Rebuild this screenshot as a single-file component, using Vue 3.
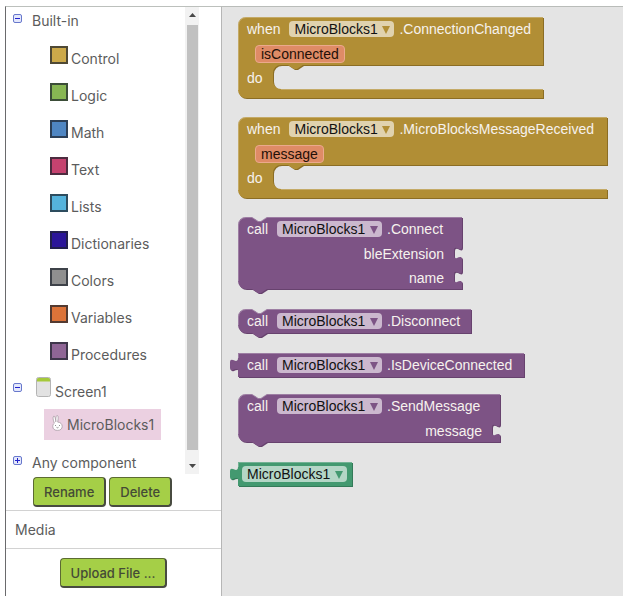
<script setup>
import { ref } from 'vue'

const drawers = [
  { name: 'Control', color: '#cca94a' },
  { name: 'Logic', color: '#87b653' },
  { name: 'Math', color: '#4f86c3' },
  { name: 'Text', color: '#c5426f' },
  { name: 'Lists', color: '#55b3dc' },
  { name: 'Dictionaries', color: '#2b1599' },
  { name: 'Colors', color: '#8f8f8f' },
  { name: 'Variables', color: '#dc7339' },
  { name: 'Procedures', color: '#8f6596' }
]

const instance = ref('MicroBlocks1')

const blocks = [
  { kind: 'event', lead: 'when', member: '.ConnectionChanged', args: ['isConnected'], width: 306 },
  { kind: 'event', lead: 'when', member: '.MicroBlocksMessageReceived', args: ['message'], width: 370 },
  { kind: 'call', lead: 'call', member: '.Connect', args: ['bleExtension', 'name'], width: 225 },
  { kind: 'call', lead: 'call', member: '.Disconnect', args: [], width: 234 },
  { kind: 'value', lead: 'call', member: '.IsDeviceConnected', args: [], width: 287 },
  { kind: 'call', lead: 'call', member: '.SendMessage', args: ['message'], width: 263 },
  { kind: 'getter', lead: '', member: '', args: [], width: 115 }
]

const HEAD = 25
const ROW = 24

// Outline of a block, with its notches, sockets and plugs.
function outline(b) {
  const w = b.width - 1
  if (b.kind === 'event') {
    return `M8,0 H${w} V48 H65 l-6,4 h-3 l-6,-4 H43 a8,8 0 0 0 -8,8 V64 a8,8 0 0 0 8,8 H${w} V81 H8 a8,8 0 0 1 -8,-8 V8 a8,8 0 0 1 8,-8 z`
  }
  if (b.kind === 'call') {
    const h = HEAD + ROW * b.args.length - 1
    const sockets = b.args
      .map((_, i) => `V${HEAD + ROW * i + 5} c0,4 -3,2 -5,1 q-3,-1 -3,2 v6 q0,3 3,2 c2,-1 5,-2 5,1`)
      .join(' ')
    return `M8,0 H14 l6,4 h3 l6,-4 H${w} ${sockets} V${h} H29 l-6,4 h-3 l-6,-4 H8 a8,8 0 0 1 -8,-8 V8 a8,8 0 0 1 8,-8 z`
  }
  return `M0,0 H${w} V24 H0 V18 c0,-3 -3,-2 -5,-1 q-3,1 -3,-2 v-6 q0,-3 3,-2 c2,1 5,2 5,-2 z`
}

function shine(b) {
  const w = b.width - 1
  if (b.kind === 'event') return `M0.5,73 V8 a7.5,7.5 0 0 1 7.5,-7.5 H${w} M43,72.5 H${w}`
  if (b.kind === 'call') {
    const h = HEAD + ROW * b.args.length - 9
    return `M0.5,${h} V8 a7.5,7.5 0 0 1 7.5,-7.5 H14 l6,4 h3 l6,-4 H${w}`
  }
  return `M0.5,5 V0.5 H${w}`
}
</script>

<template>
  <div class="app">
    <aside class="side">
      <div class="tree-wrap">
        <nav class="tree" aria-label="Blocks">
          <div class="branch first">
            <button class="toggle" type="button" aria-label="Collapse Built-in">
              <svg viewBox="0 0 9 9"><rect x=".5" y=".5" width="8" height="8" rx="1.5" /><path d="M2,4.5 h5" /></svg>
            </button>
            <span>Built-in</span>
          </div>
          <a v-for="d in drawers" :key="d.name" class="drawer" href="#">
            <i class="swatch" :style="{ backgroundColor: d.color }"></i>
            <span>{{ d.name }}</span>
          </a>
          <div class="branch screen">
            <button class="toggle" type="button" aria-label="Collapse Screen1">
              <svg viewBox="0 0 9 9"><rect x=".5" y=".5" width="8" height="8" rx="1.5" /><path d="M2,4.5 h5" /></svg>
            </button>
            <svg class="phone" viewBox="0 0 15 20">
              <rect x=".5" y=".5" width="14" height="19" rx="2" fill="#e2e2e2" stroke="#b4b4b4" />
              <path d="M1,4.5 V2.5 a1.5,1.5 0 0 1 1.5,-1.5 h10 a1.5,1.5 0 0 1 1.5,1.5 v2 z" fill="#a5c93a" />
            </svg>
            <span>Screen1</span>
          </div>
          <a class="selected" href="#">
            <svg class="rabbit" viewBox="0 0 11 16" fill="#fff" stroke="#a89ca4" stroke-width=".8">
              <path d="M2.3,8.2 C1,5 .6,1.8 1.7,1.2 C3,.6 3.6,4 3.8,6.8 C3.7,3.4 4,.4 5.2,.5 C6.6,.7 6.2,4.2 5.7,7.1 C8.5,7.2 10.2,9 10.2,11.4 C10.2,13.8 8.4,15.4 5.5,15.4 C2.6,15.4 .8,14 .8,11.6 C.8,10 1.4,8.9 2.3,8.2 z" />
              <path d="M3.5,10 v1 M7.5,10 v1 M4.5,12.3 q1,1 2,0" fill="none" stroke="#777" />
            </svg>
            <span>MicroBlocks1</span>
          </a>
          <div class="branch last">
            <button class="toggle" type="button" aria-label="Expand Any component">
              <svg viewBox="0 0 9 9"><rect x=".5" y=".5" width="8" height="8" rx="1.5" /><path d="M2,4.5 h5 M4.5,2 v5" /></svg>
            </button>
            <span>Any component</span>
          </div>
        </nav>
        <div class="bar" aria-hidden="true">
          <svg viewBox="0 0 7 4"><path d="M0,4 L3.5,0 L7,4 z" /></svg>
          <div class="thumb"></div>
          <svg viewBox="0 0 7 4"><path d="M0,0 L3.5,4 L7,0 z" /></svg>
        </div>
      </div>
      <div class="actions">
        <button class="btn" type="button">Rename</button>
        <button class="btn" type="button">Delete</button>
      </div>
      <h2 class="media">Media</h2>
      <div class="upload">
        <button class="btn" type="button">Upload File ...</button>
      </div>
    </aside>

    <main class="canvas">
      <div v-for="(b, i) in blocks" :key="i" class="block" :class="b.kind" :style="{ width: b.width + 'px' }">
        <svg class="shape" aria-hidden="true">
          <path class="edge" :d="outline(b)" transform="translate(1 1)" />
          <path class="body" :d="outline(b)" />
          <path class="shine" :d="shine(b)" />
        </svg>
        <div class="head">
          <span v-if="b.lead" class="lead">{{ b.lead }}</span>
          <span class="pick">
            <select v-model="instance" aria-label="Component">
              <option>MicroBlocks1</option>
            </select>
            <svg viewBox="0 0 8 8" aria-hidden="true"><path d="M0,0 H8 L4,8 z" /></svg>
          </span>
          <span v-if="b.member">{{ b.member }}</span>
        </div>
        <template v-if="b.kind === 'event'">
          <div class="params">
            <span v-for="a in b.args" :key="a" class="param">{{ a }}</span>
          </div>
          <div class="do">do</div>
        </template>
        <template v-else>
          <div v-for="a in b.args" :key="a" class="arg">{{ a }}</div>
        </template>
      </div>
    </main>
  </div>
</template>

<style>
body {
  background: #fff;
}
</style>

<style scoped>
.app {
  box-sizing: border-box;
  min-height: 100vh;
  padding: 6px 5px 4px;
  display: grid;
  grid-template-columns: 217px 1fr;
  font-family: Inter, "Open Sans", sans-serif;
  font-size: 14px;
  color: #5c5c5c;
}
.side {
  display: flex;
  flex-direction: column;
  border-left: 1px solid #6a6a6c;
  border-right: 1px solid #b6b6b6;
  border-top: 1px solid #bcc0bc;
}
.tree-wrap {
  display: flex;
  justify-content: space-between;
  padding-right: 22px;
}
.tree {
  display: flex;
  flex-direction: column;
  align-items: flex-start;
}
.tree a {
  color: inherit;
  text-decoration: none;
}
.branch {
  display: flex;
  align-items: center;
  padding-left: 7px;
}
.first {
  height: 27px;
  margin-bottom: 6px;
}
.screen {
  height: 36px;
}
.last {
  height: 23px;
  margin-top: 11px;
}
.toggle {
  flex: none;
  width: 9px;
  height: 9px;
  margin: 0 10px 4px 0;
  padding: 0;
  border: 0;
  background: none;
}
.toggle svg {
  display: block;
  width: 9px;
  height: 9px;
  fill: #e4e8fc;
  stroke: #6878cc;
}
.toggle path {
  stroke: #2222cc;
}
.screen .toggle {
  margin-bottom: 8px;
  margin-right: 14px;
}
.phone {
  width: 15px;
  height: 20px;
  margin: 0 4px 8px 0;
}
.drawer {
  display: flex;
  align-items: baseline;
  gap: 3px;
  height: 37px;
  line-height: 37px;
  padding-left: 44px;
}
.swatch {
  box-sizing: border-box;
  width: 18px;
  height: 18px;
  border: 2px solid rgba(30, 36, 46, 0.72);
}
.selected {
  display: flex;
  align-items: center;
  gap: 4px;
  height: 31px;
  margin-left: 38px;
  padding: 0 7px 0 8px;
  background: #ebd0e1;
}
.rabbit {
  width: 11px;
  height: 16px;
  margin-bottom: 4px;
}
.bar {
  display: flex;
  flex-direction: column;
  align-items: center;
  gap: 8px;
  width: 14px;
  padding: 6px 0;
  box-sizing: border-box;
  background: #f2f2f2;
}
.bar svg {
  flex: none;
  width: 7px;
  height: 4px;
  fill: #484848;
}
.thumb {
  flex: 1;
  width: 11px;
  margin-bottom: 6px;
  background: #c1c1c1;
}
.actions {
  display: flex;
  gap: 3px;
  padding: 3px 0 3px 27px;
}
.btn {
  height: 30px;
  padding: 0 10px;
  border: 1px solid #5c6b32;
  border-right: 2px solid #484b40;
  border-bottom: 2px solid #484b40;
  border-radius: 4px;
  background: #a5cf47;
  color: #444a36;
  font: 500 13px Inter, "Open Sans", sans-serif;
}
.media {
  margin: 0;
  padding-left: 9px;
  border-top: 1px solid #d2d2d2;
  border-bottom: 1px solid #d2d2d2;
  font-size: 14px;
  font-weight: 400;
  line-height: 37px;
}
.upload {
  padding-top: 9px;
  text-align: center;
}

.canvas {
  display: flex;
  flex-direction: column;
  align-items: flex-start;
  gap: 16px;
  padding: 10px 15px 0 16px;
  border-top: 1px solid #b9bcb9;
  background: #e4e4e4;
  font-family: "Liberation Sans", Arial, sans-serif;
  color: #f6f2ee;
}
.block {
  position: relative;
  --fill: #7d5385;
  --edge: #67426e;
  --chip: #cbb8ce;
}
.block.event {
  --fill: #b18e35;
  --edge: #8b6d24;
  --chip: #e0d2ae;
  padding-bottom: 12px;
}
.block.call {
  padding-bottom: 3px;
}
.block.getter {
  --fill: #439970;
  --edge: #337a58;
  --chip: #b4d6c6;
}
.shape {
  position: absolute;
  inset: 0;
  width: 100%;
  height: 100%;
  overflow: visible;
}
.edge {
  fill: var(--edge);
}
.body {
  fill: var(--fill);
}
.shine {
  fill: none;
  stroke: #fff;
  stroke-opacity: 0.25;
}
.head,
.params,
.do,
.arg {
  position: relative;
  display: flex;
  align-items: center;
  height: 24px;
}
.head {
  box-sizing: border-box;
  height: 25px;
  padding: 0 0 1px 9px;
  gap: 5px;
  white-space: nowrap;
}
.lead {
  margin-right: 4px;
}
.getter .head {
  padding-left: 4px;
}
.pick {
  position: relative;
  display: flex;
}
.pick select {
  appearance: none;
  width: 105px;
  height: 16px;
  margin: 0;
  padding: 0 5px;
  border: 0;
  border-radius: 4px;
  background: var(--chip);
  color: #111;
  font: 14px/16px "Liberation Sans", Arial, sans-serif;
}
.pick svg {
  position: absolute;
  right: 4px;
  top: 5px;
  width: 8px;
  height: 8px;
  fill: var(--fill);
  pointer-events: none;
}
.params {
  box-sizing: border-box;
  padding: 0 0 1px 17px;
}
.param {
  box-sizing: border-box;
  height: 18px;
  padding: 0 5px;
  border: 1px solid #eba98c;
  border-radius: 4px;
  background: #df8b66;
  color: #241008;
  line-height: 16px;
}
.do {
  height: 23px;
  padding-left: 9px;
}
.arg {
  justify-content: flex-end;
  padding-right: 19px;
}
</style>
